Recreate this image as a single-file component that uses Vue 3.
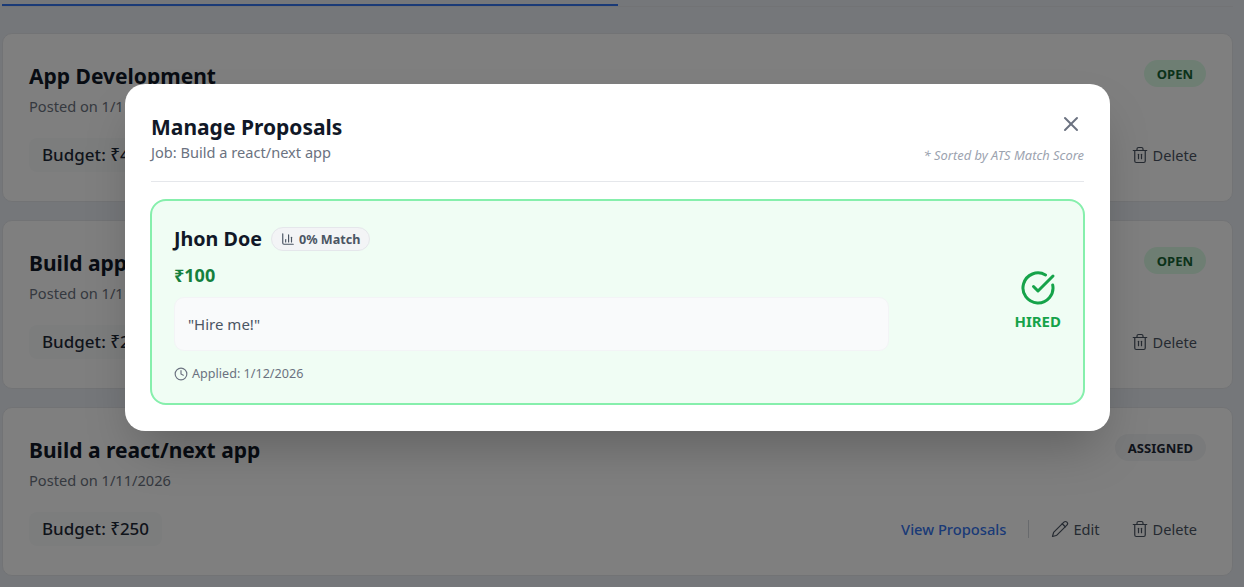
<template>
  <div class="page">
    <div class="tabs"><div class="tab-active"></div></div>

    <div class="job-list">
      <div v-for="job in jobs" :key="job.title" class="job-card">
        <div class="job-top">
          <div>
            <h3 class="job-title">{{ job.title }}</h3>
            <p class="job-date">Posted on {{ job.date }}</p>
          </div>
          <span class="status" :class="job.status.toLowerCase()">{{ job.status }}</span>
        </div>
        <div class="job-bottom">
          <span class="budget">Budget: ₹{{ job.budget }}</span>
          <div class="job-actions">
            <a class="view-link">View Proposals</a>
            <span class="divider"></span>
            <button class="action">
              <svg width="18" height="18" viewBox="0 0 24 24" fill="none" stroke="currentColor" stroke-width="1.6" stroke-linecap="round" stroke-linejoin="round">
                <path d="M21.2 6.8a2.8 2.8 0 0 0-4-4L3.8 16.2a2 2 0 0 0-.5.9L2 22l4.9-1.3a2 2 0 0 0 .9-.5z" />
                <path d="m15 5 4 4" />
              </svg>
              Edit
            </button>
            <button class="action">
              <svg width="18" height="18" viewBox="0 0 24 24" fill="none" stroke="currentColor" stroke-width="1.6" stroke-linecap="round" stroke-linejoin="round">
                <path d="M3 6h18" />
                <path d="M19 6v14a2 2 0 0 1-2 2H7a2 2 0 0 1-2-2V6" />
                <path d="M8 6V4a2 2 0 0 1 2-2h4a2 2 0 0 1 2 2v2" />
                <path d="M10 11v6" />
                <path d="M14 11v6" />
              </svg>
              Delete
            </button>
          </div>
        </div>
      </div>
    </div>

    <div class="overlay">
      <div class="modal">
        <div class="modal-head">
          <div>
            <h2 class="modal-title">Manage Proposals</h2>
            <p class="modal-sub">Job: Build a react/next app</p>
          </div>
          <div class="head-right">
            <button class="close">
              <svg width="24" height="24" viewBox="0 0 24 24" fill="none" stroke="currentColor" stroke-width="2" stroke-linecap="round" stroke-linejoin="round">
                <path d="M18 6 6 18" />
                <path d="m6 6 12 12" />
              </svg>
            </button>
            <span class="sort-note">* Sorted by ATS Match Score</span>
          </div>
        </div>

        <div class="proposal">
          <div class="proposal-main">
            <div class="name-row">
              <span class="name">Jhon Doe</span>
              <span class="match">
                <svg width="14" height="14" viewBox="0 0 24 24" fill="none" stroke="currentColor" stroke-width="2" stroke-linecap="round" stroke-linejoin="round">
                  <path d="M3 3v16a2 2 0 0 0 2 2h16" />
                  <path d="M8 17v-4" />
                  <path d="M13 17V5" />
                  <path d="M18 17V9" />
                </svg>
                0% Match
              </span>
            </div>
            <div class="bid">₹100</div>
            <div class="cover">"Hire me!"</div>
            <div class="applied">
              <svg width="14" height="14" viewBox="0 0 24 24" fill="none" stroke="currentColor" stroke-width="2" stroke-linecap="round" stroke-linejoin="round">
                <circle cx="12" cy="12" r="10" />
                <path d="M12 6v6l4 2" />
              </svg>
              Applied: 1/12/2026
            </div>
          </div>
          <div class="hired">
            <svg width="36" height="36" viewBox="0 0 24 24" fill="none" stroke="currentColor" stroke-width="2" stroke-linecap="round" stroke-linejoin="round">
              <path d="M21.8 10A10 10 0 1 1 17 3.3" />
              <path d="m9 11 3 3L22 4" />
            </svg>
            <span>HIRED</span>
          </div>
        </div>
      </div>
    </div>
  </div>
</template>

<script setup>
const jobs = [
  { title: "App Development", date: "1/11/2026", status: "OPEN", budget: 400 },
  { title: "Build app", date: "1/11/2026", status: "OPEN", budget: 200 },
  { title: "Build a react/next app", date: "1/11/2026", status: "ASSIGNED", budget: 250 },
];
</script>

<style>
html,
body {
  margin: 0;
  height: 100%;
  overflow: hidden;
  background: #eaeef5;
}
</style>

<style scoped>
.page {
  position: relative;
  height: 587px;
  padding: 4px 11px 0 2px;
  box-sizing: border-box;
  font-family: "Noto Sans", "Open Sans", sans-serif;
  color: #111827;
}

.tabs {
  border-bottom: 1px solid #e5e7eb;
  height: 2px;
  margin-bottom: 26px;
}

.tab-active {
  width: 616px;
  height: 2px;
  background: #3574ee;
}

.job-list {
  display: flex;
  flex-direction: column;
  gap: 18px;
}

.job-card {
  height: 169px;
  box-sizing: border-box;
  padding: 28px 26px 0;
  background: #fff;
  border: 1px solid #e5e7eb;
  border-radius: 10px;
}

.job-top {
  display: flex;
  justify-content: space-between;
  align-items: flex-start;
}

.job-title {
  margin: 0;
  font-size: 21px;
  line-height: 28px;
  font-weight: 700;
}

.job-date {
  margin: 6px 0 0;
  font-size: 14.6px;
  line-height: 20px;
  color: #6b7280;
}

.status {
  height: 27px;
  margin-top: -2px;
  padding: 0 13px;
  line-height: 28px;
  border-radius: 14px;
  font-size: 13px;
  font-weight: 700;
}

.status.open {
  background: #dcfce7;
  color: #166534;
}

.status.assigned {
  background: #f3f4f6;
  color: #1f2937;
}

.job-bottom {
  display: flex;
  justify-content: space-between;
  align-items: center;
  margin-top: 22px;
}

.budget {
  padding: 5px 13px;
  line-height: 24px;
  font-size: 17px;
  font-weight: 500;
  color: #1f2937;
  background: #f9fafb;
  border-radius: 8px;
}

.job-actions {
  display: flex;
  align-items: center;
  margin-right: 9px;
}

.view-link {
  font-size: 14.7px;
  font-weight: 500;
  color: #3574ee;
}

.divider {
  width: 1px;
  height: 18px;
  margin: 0 22px;
  background: #d1d5db;
}

.action {
  display: flex;
  align-items: center;
  gap: 4px;
  padding: 0;
  border: 0;
  background: none;
  font: inherit;
  font-size: 14.6px;
  color: #4b5563;
}

.action + .action {
  margin-left: 31px;
}

.overlay {
  position: absolute;
  inset: 0;
  display: flex;
  align-items: flex-start;
  justify-content: center;
  padding: 84px 134px 0 125px;
  background: rgba(0, 0, 0, 0.5);
}

.modal {
  width: 985px;
  height: 347px;
  box-sizing: border-box;
  padding: 26px 26px 0;
  background: #fff;
  border-radius: 20px;
  box-shadow: 0 25px 50px -12px rgba(0, 0, 0, 0.25);
}

.modal-head {
  display: flex;
  justify-content: space-between;
  height: 71px;
  border-bottom: 1px solid #e5e7eb;
}

.modal-title {
  margin: 3px 0 0;
  font-size: 21px;
  line-height: 28px;
  font-weight: 700;
}

.modal-sub {
  margin: 1px 0 0;
  font-size: 14.6px;
  line-height: 20px;
  color: #6b7280;
}

.head-right {
  display: flex;
  flex-direction: column;
  align-items: flex-end;
}

.close {
  width: 24px;
  height: 24px;
  margin: 2px 1px 0 0;
  padding: 0;
  border: 0;
  background: none;
  color: #6b7280;
}

.sort-note {
  margin-top: 11px;
  font-size: 12.9px;
  line-height: 16px;
  font-style: italic;
  color: #9ca3af;
}

.proposal {
  display: flex;
  justify-content: space-between;
  align-items: center;
  height: 206px;
  box-sizing: border-box;
  margin: 17px -1px 0;
  padding: 0 22px;
  background: #f0fdf4;
  border: 2px solid #86efac;
  border-radius: 16px;
}

.proposal-main {
  align-self: flex-start;
  width: 715px;
  margin-top: 24px;
}

.name-row {
  display: flex;
  align-items: center;
  gap: 9px;
}

.name {
  font-size: 19.7px;
  line-height: 28px;
  font-weight: 700;
}

.match {
  display: flex;
  align-items: center;
  gap: 4px;
  height: 24px;
  padding: 0 9px;
  box-sizing: border-box;
  font-size: 12.6px;
  font-weight: 700;
  color: #4b5563;
  background: #f3f4f6;
  border: 1px solid #e5e7eb;
  border-radius: 12px;
}

.bid {
  margin-top: 10px;
  font-size: 18px;
  line-height: 24px;
  font-weight: 700;
  color: #15803d;
}

.cover {
  margin-top: 10px;
  height: 54px;
  box-sizing: border-box;
  padding: 0 13px;
  line-height: 52px;
  font-size: 15px;
  color: #4b5563;
  background: #f9fafb;
  border: 1px solid #f3f4f6;
  border-radius: 10px;
}

.applied {
  display: flex;
  align-items: center;
  gap: 4px;
  margin-top: 14px;
  font-size: 12.6px;
  line-height: 18px;
  color: #6b7280;
}

.hired {
  display: flex;
  flex-direction: column;
  align-items: center;
  gap: 5px;
  margin-bottom: 4px;
  color: #16a34a;
  font-size: 15px;
  font-weight: 700;
}
</style>
